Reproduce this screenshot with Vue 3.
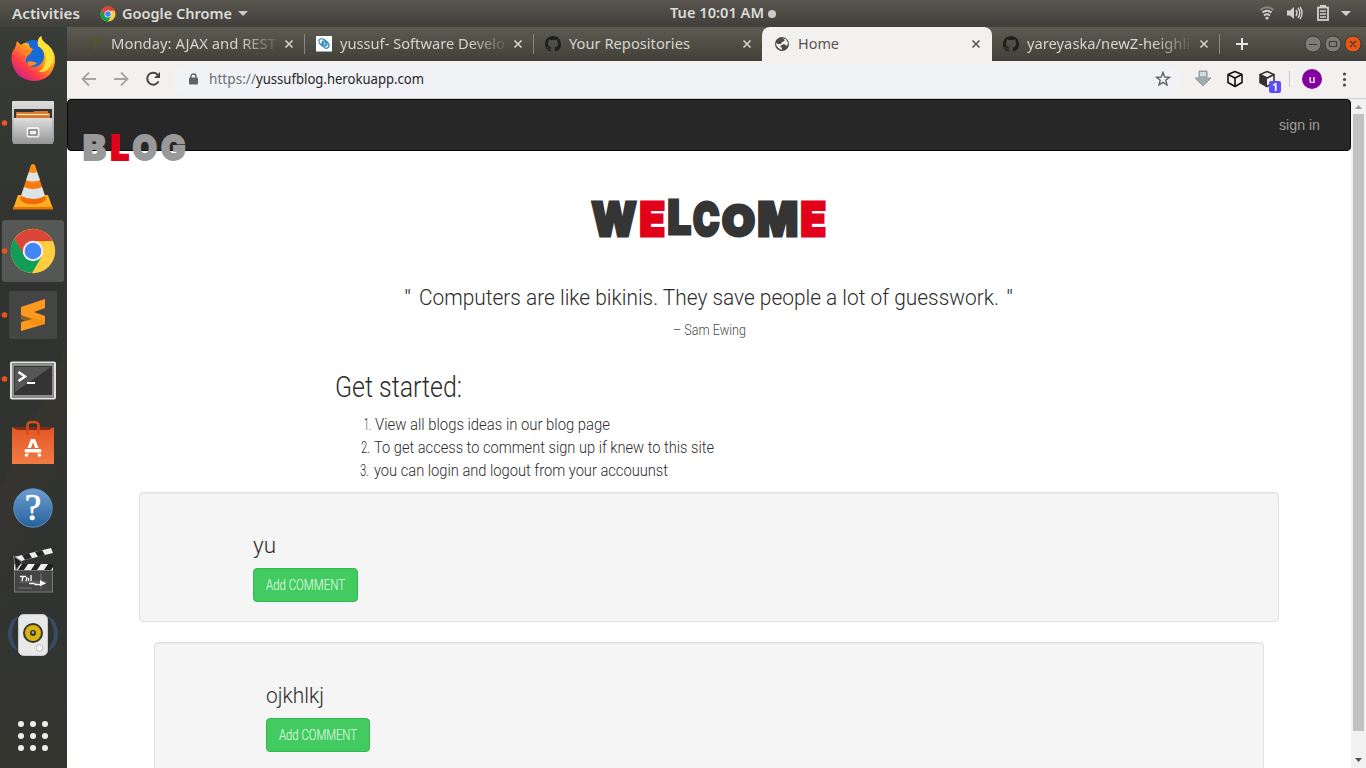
<script setup>
import { h } from 'vue'

// Single line of text drawn at an exact measure, baseline given from the box top.
const Fit = (p) =>
  h('svg', { class: 'fit', width: p.w, height: p.h, role: 'text' }, [
    h('text', { x: 0, y: p.b, 'font-size': p.s, textLength: p.w, lengthAdjust: 'spacingAndGlyphs' }, p.t),
  ])
Fit.props = ['t', 'w', 'h', 'b', 's']

const tabs = [
  { title: 'Monday: AJAX and REST', w: 165, kind: 'tree', cls: 'first fade' },
  { title: 'yussuf- Software Develo', w: 165, kind: 'swirl', cls: 'second fade' },
  { title: 'Your Repositories', w: 121, kind: 'github', cls: 'nosep' },
  { title: 'Home', w: 41, kind: 'globe', cls: 'active' },
  { title: 'yareyaska/newZ-heighli', w: 163, kind: 'github', cls: 'last fade' },
]
const steps = [
  { n: '1.', nw: 7, t: 'View all blogs ideas in our blog page', w: 235, pad: 364, gap: 4 },
  { n: '2.', nw: 9, t: 'To get access to comment sign up if knew to this site', w: 340, pad: 361, gap: 4 },
  { n: '3.', nw: 9, t: 'you can login and logout from your accouunst', w: 294, pad: 360, gap: 5 },
]
const posts = [
  { name: 'yu', w: 23, bw: 79, cls: '' },
  { name: 'ojkhlkj', w: 58, bw: 78, cls: 'inner' },
]
const welcome = [
  { c: 'W', x: 591.5, w: 45, y: 237 }, { c: 'E', x: 639.5, w: 25.5, y: 237, red: true },
  { c: 'L', x: 667.5, w: 23.5, y: 235 }, { c: 'C', x: 693, w: 26.5, y: 237 },
  { c: 'O', x: 722, w: 33, y: 237, small: true }, { c: 'M', x: 757.5, w: 40.5, y: 237 },
  { c: 'E', x: 800.5, w: 25.5, y: 237, red: true },
]
const blog = [
  { c: 'B', x: 83, w: 23 }, { c: 'L', x: 110.5, w: 18.5, red: true },
  { c: 'O', x: 132.500, w: 24.5 }, { c: 'G', x: 161, w: 24.5 },
]
</script>

<template>
  <div class="desktop">
    <header class="topbar">
      <Fit class="act" t="Activities" :w="68" :h="27" :b="19" :s="14.5" />
      <svg class="minichrome" width="16" height="16" viewBox="9 227 48 48">
        <circle cx="33" cy="251" r="22.5" fill="#ffcd40" />
        <path d="M13 240A22.5 22.5 0 0 1 53.5 241H33L23 257Z" fill="#db4437" />
        <path d="M13.5 240A22.5 22.5 0 0 0 33 273.5L43 256H24Z" fill="#0f9d58" />
        <circle cx="33" cy="251" r="10.5" fill="#f1f1f1" /><circle cx="33" cy="251" r="8.3" fill="#4285f4" />
      </svg>
      <Fit class="appname" t="Google Chrome" :w="110" :h="27" :b="19" :s="14.5" />
      <svg class="caret" width="10" height="5"><path d="M0 0H10L5 5Z" fill="#ccc" /></svg>
      <Fit class="clock" t="Tue 10:01 AM" :w="94" :h="27" :b="18" :s="14.5" />
      <svg class="bullet" width="8" height="8"><circle cx="4" cy="4" r="4" fill="#ccc" /></svg>
      <svg class="tray" width="100" height="27" viewBox="1256 0 100 27">
        <g fill="none" stroke="#d0d0cd">
          <path d="M1260.5 10Q1267 4.5 1273.5 10" stroke="#858580" stroke-width="2" />
          <path d="M1262.5 12.5Q1267 9 1271.5 12.5M1264 15.5Q1267 13 1270 15.5" stroke-width="1.8" />
          <path d="M1296 10Q1298 13 1296 16M1298 8Q1301.500 13 1298 18M1300 7Q1304 13 1300 19" stroke-width="1.4" />
          <rect x="1318" y="7.500" width="10" height="12.500" stroke-width="1.8" />
          <path d="M1320 11H1326M1320 14H1326M1320 17H1326" stroke-width="1.400" />
        </g>
        <path d="M1265 18L1267 20L1269 18L1267 16.500ZM1287 10.500H1290L1294 7V19L1290 15.500H1287ZM1320 5H1326V8H1320ZM1341 11H1351L1346 16Z" fill="#d0d0cd" />
      </svg>
    </header>

    <div class="body">
      <aside class="dock">
        <svg viewBox="0 27 67 64">
          <defs>
            <linearGradient id="ff" x1="1" y1="0" x2="0.2" y2="1"><stop stop-color="#fff14a" /><stop offset=".45" stop-color="#ffa51c" /><stop offset=".75" stop-color="#ff3a47" /><stop offset="1" stop-color="#c6209a" /></linearGradient>
            <linearGradient id="silver" x1="0" y1="0" x2="0" y2="1"><stop stop-color="#dedede" /><stop offset="1" stop-color="#959595" /></linearGradient>
            <linearGradient id="orange" x1="0" y1="0" x2="0" y2="1"><stop stop-color="#ff941d" /><stop offset="1" stop-color="#ef6500" /></linearGradient>
            <linearGradient id="bag" x1="0" y1="0" x2="0" y2="1"><stop stop-color="#e35625" /><stop offset="1" stop-color="#f27c43" /></linearGradient>
            <linearGradient id="blue" x1="0" y1="0" x2="0" y2="1"><stop stop-color="#6a9ed5" /><stop offset="1" stop-color="#276099" /></linearGradient>
          </defs>
          <circle cx="34" cy="57" r="17" fill="#1769d3" />
          <path d="M17 41L21 45Q25 41 29 44Q29 48 33 49L30 54Q25 57 26 62Q30 69 38 66Q45 62 44 54Q43 48 38 45Q37 39 41 36Q42 42 48 45Q56 52 55 62Q52 81 33 81Q14 79 11.500 60Q11 52 15 48Z" fill="url(#ff)" />
          <path d="M41 36Q42 42 48 45Q55 52 53 62Q48 73 39 72Q46 67 46 58Q44 49 38 46Q37 39 41 36" fill="#ffe237" />
          <path d="M27 62Q31 60 37 63Q34 66 29 66" fill="#ff8b26" />
          <path d="M21 52Q26 47 32 50Q30 54 25 56Z" fill="#ff8425" />
        </svg>
        <svg viewBox="0 91 67 64">
          <circle cx="4.500" cy="123" r="2.800" fill="#e95420" />
          <rect x="12" y="101" width="42" height="41" rx="1" fill="url(#silver)" />
          <path d="M14 109H52V121H14Z" fill="#343434" />
          <path d="M16 114V112H33L35 111H48V113H50V121H16Z" fill="#db7429" /><path d="M17 114.500H49" stroke="#fff1c9" stroke-width="1.200" />
          <path d="M14 118H52L53 144H13Z" fill="url(#silver)" /><rect x="27.500" y="128" width="11" height="8.500" rx="1" fill="#d9d9d9" stroke="#eee" stroke-width="2" /><rect x="29" y="130" width="8" height="5" fill="#eee" stroke="#555" />
        </svg>
        <svg viewBox="0 155 67 64">
          <path d="M18 195H48L53 209H13Z" fill="#ffad22" /><path d="M13 207H53V209.500H13Z" fill="#e97500" />
          <path d="M31 165Q33 163 35 165L46 199Q44 204 33 204Q22 204 20 199Z" fill="url(#orange)" />
          <path d="M29 172Q33 174 37 172L40 180Q33 183 26 180ZM24 187Q33 191 42 187L45 196Q34 202 21 196Z" fill="#dce4e8" />
        </svg>
        <svg viewBox="0 219 67 64">
          <rect x="2" y="220" width="62" height="62" rx="3" fill="#fff" opacity=".18" /><circle cx="4.500" cy="251" r="2.800" fill="#e95420" />
          <circle cx="33" cy="251" r="22.200" fill="#ffcd40" /><path d="M14.500 239A22 22 0 0 1 52.500 241H33L24 256Z" fill="#db4437" />
          <path d="M14.500 239A22 22 0 0 0 32 273L42 256L34 261L24 255Z" fill="#0f9d58" />
          <circle cx="33" cy="251" r="10.200" fill="#f1f1f1" /><circle cx="33" cy="251" r="8.300" fill="#4285f4" />
        </svg>
        <svg viewBox="0 283 67 64">
          <circle cx="4.500" cy="315" r="2.800" fill="#e95420" /><rect x="9" y="291" width="48" height="48" rx="2" fill="#454545" />
          <path d="M21 307L45 299V308L34 312L45 316V324L21 331V322L32 319L21 315Z" fill="#ff9820" /><path d="M21 315L45 321V324L38 326L21 319Z" fill="#e88300" opacity=".45" />
        </svg>
        <svg viewBox="0 347 67 64">
          <circle cx="4.500" cy="379" r="2.800" fill="#e95420" /><rect x="11" y="362.500" width="44" height="36" rx="1" fill="#343434" stroke="#e1e1e1" stroke-width="2" /><rect x="13" y="365" width="40" height="31" fill="none" stroke="#aaa" stroke-width="1.500" />
          <path d="M15 367H51L15 392Z" fill="#565656" /><path d="M18.500 372L25 376.500L18.500 381" fill="none" stroke="#fff" stroke-width="2.500" /><path d="M27 383H35" stroke="#fff" stroke-width="2" />
        </svg>
        <svg viewBox="0 411 67 64">
          <path d="M14 427H52V433H14Z" fill="#812c15" /><path d="M12 427L17 430H49L54 427V464H12Z" fill="url(#bag)" />
          <path d="M27.500 435V425Q27.500 422 33 422Q38.500 422 38.500 425V435" fill="none" stroke="#d84b1e" stroke-width="2.600" />
          <path d="M26 456.500L32 440.500H34L40 456.500" fill="none" stroke="#fff" stroke-width="3.200" /><rect x="24" y="448.500" width="18" height="4.500" rx="2" fill="#fff" stroke="#e96632" />
        </svg>
        <svg viewBox="0 475 67 64">
          <circle cx="33" cy="508" r="19.200" fill="url(#blue)" stroke="#5f91c4" /><text x="33" y="520" text-anchor="middle" font-family="Liberation Serif, serif" font-size="37" fill="#fff" stroke="#fff" stroke-width=".7">?</text>
        </svg>
        <svg viewBox="0 539 67 64">
          <path d="M14 557L51 548L53 553L17 562Z" fill="#eee" /><path d="M22 555L29 553L32 558L25 560ZM35 552L42 550L45 555L38 557Z" fill="#272727" />
          <path d="M14 564H53V570H14Z" fill="#eee" /><path d="M22 564H28L24 570H18ZM35 564H41L37 570H31ZM48 564H53V567L51 570H44Z" fill="#222" /><path d="M13.500 556L22 562L16 570Z" fill="#222" stroke="#777" />
          <rect x="14.500" y="570.500" width="38" height="21.500" fill="#454545" stroke="#777" />
          <path d="M19 588H32M19 582H47M41 573V589" stroke="#777" /><path d="M20 576.500H26M23 576.500L22 581M27 577L26 581M28.500 578V581M31 575V581M29 583.500H34M35 583V584.500H40" fill="none" stroke="#fff" stroke-width="1.300" /><path d="M40 580L46 583.500L40 586Z" fill="#fff" />
        </svg>
        <svg viewBox="0 603 67 64">
          <path d="M17 617Q5 634 17 650M14 619Q4 634 14 648M49 617Q61 634 49 650M52 619Q62 634 52 648" fill="none" stroke="#386092" stroke-width="2" opacity=".55" />
          <rect x="18.500" y="614.500" width="29" height="41" rx="5" fill="#e8e8e8" stroke="#c8c8c8" /><circle cx="33" cy="633" r="10" fill="#353535" /><circle cx="33" cy="633" r="8" fill="#d8b50d" /><circle cx="33" cy="633" r="3" fill="#333" /><circle cx="33" cy="632.500" r="1.300" fill="#aaa" /><circle cx="39.500" cy="648" r="3.300" fill="#fafafa" stroke="#bbb" />
        </svg>
        <svg class="apps" viewBox="0 704 67 64" fill="#eeeeec">
          <template v-for="y in 3" :key="y"><circle v-for="x in 3" :key="x" :cx="9 + x * 12" :cy="712 + y * 12" r="3" /></template>
        </svg>
      </aside>

      <main class="browser">
        <nav class="tabs">
          <div v-for="(t, i) in tabs" :key="i" class="tab" :class="t.cls">
            <svg class="fav" width="16" height="16" viewBox="0 0 16 16">
              <path v-if="t.kind === 'tree'" d="M2 6L4 3L7 4L9 1L12 3L14 6L11 6L13 9L9 7L9 14L8 14L8 8L4 9L5 6Z" fill="#4c5730" />
              <g v-else-if="t.kind === 'swirl'"><rect width="16" height="15.500" fill="#fff" /><g fill="none" stroke="#2383bd" stroke-width="1.200"><ellipse cx="7" cy="6.500" rx="4.500" ry="3" transform="rotate(35 7 6.500)" /><ellipse cx="9.500" cy="8.500" rx="4" ry="3" transform="rotate(55 9.500 8.500)" /><circle cx="8.500" cy="7.500" r="1.500" /></g></g>
              <path v-else-if="t.kind === 'github'" fill="#1d1f1d" d="M8 0C3.580 0 0 3.580 0 8c0 3.540 2.290 6.530 5.470 7.590.4.070.55-.17.55-.38v-1.490c-2.010.37-2.530-.49-2.690-.94-.09-.23-.48-.94-.82-1.130-.28-.15-.68-.52-.01-.53.63-.01 1.080.58 1.230.82.72 1.210 1.870.87 2.330.66.07-.52.28-.87.51-1.070-1.780-.2-3.640-.89-3.640-3.950 0-.87.31-1.590.82-2.150-.08-.2-.36-1.020.08-2.120 0 0 .67-.21 2.200.82a7.400 7.400 0 0 1 4 0c1.530-1.040 2.200-.82 2.200-.82.44 1.100.16 1.920.08 2.120.51.56.82 1.270.82 2.150 0 3.070-1.870 3.750-3.650 3.950.29.25.54.73.54 1.480v2.190c0 .21.150.46.55.38A8 8 0 0 0 16 8c0-4.420-3.580-8-8-8z" />
              <g v-else><circle cx="8" cy="8" r="7" fill="#4a4a4a" /><path d="M7 2L10 3Q12 5 8 6L7 8H4L2 7Q2 11 6 13L8 14V12L6 10L10 8L13 10L14 7L12 3Z" fill="#f2f1ef" /></g>
            </svg>
            <Fit class="title" :t="t.title" :w="t.w" :h="34" :b="22" :s="14.500" />
            <svg class="x" width="10" height="10" viewBox="0 0 10 10"><path d="M1.500 1.500L8.500 8.500M8.500 1.500L1.500 8.500" stroke="currentColor" stroke-width="1.600" /></svg>
          </div>
          <svg class="winctl" width="146" height="34" viewBox="1220 27 146 34">
            <path d="M1236 44H1248M1242 38V50" stroke="#e6e5df" stroke-width="2" />
            <g fill="#7d7c75" stroke="#3b3a36"><circle cx="1313" cy="44" r="8" /><circle cx="1333" cy="44" r="8" /><circle cx="1353" cy="44" r="8" fill="#ed5515" /></g>
            <path d="M1309 44.500H1317M1329.500 41.500H1336.500V46.500H1329.500ZM1350 41L1356 47M1356 41L1350 47" fill="none" stroke="#3c3b37" stroke-width="1.200" />
          </svg>
        </nav>

        <div class="toolbar">
          <svg class="nav" width="102" height="37" viewBox="67 61 102 37" fill="none" stroke-width="1.800">
            <path d="M96 79H83M89 72.500L82.500 79L89 85.500M114 79H127M121 72.500L127.500 79L121 85.500" stroke="#a6a5a4" />
            <path d="M158 75A6 6 0 1 0 158.500 81.500" stroke="#454545" stroke-width="2" /><path d="M160 72V78H154Z" fill="#454545" />
          </svg>
          <div class="omnibox">
            <svg class="lock" width="9" height="12"><path d="M2 5V3.500Q2 1 4.500 1Q7 1 7 3.500V5" fill="none" stroke="#5f6368" stroke-width="1.400" /><rect y="4.500" width="9" height="7" rx="1" fill="#5f6368" /></svg>
            <Fit class="scheme" t="https://" :w="47" :h="31" :b="19" :s="14" />
            <Fit class="host" t="yussufblog.herokuapp.com" :w="168" :h="31" :b="19" :s="14" />
            <svg class="star" width="16" height="16" viewBox="0 0 16 16"><path d="M8 1.500L9.800 6L14.500 6.300L10.800 9.300L12 14L8 11.300L4 14L5.200 9.300L1.500 6.300L6.200 6Z" fill="none" stroke="#5f6368" stroke-width="1.400" /></svg>
          </div>
          <svg class="ext" width="185" height="37" viewBox="1181 61 185 37">
            <path d="M1199 71H1207V78H1211L1203 86L1195 78H1199Z" fill="#9eabb0" stroke="#8c9ba1" /><path d="M1200 72H1206V76H1200Z" fill="#d4dcdf" />
            <path d="M1235 71.500L1242 74.500V82.500L1235 86.500L1228 82.500V74.500ZM1228 74.500L1235 78L1242 74.500M1235 78V86" fill="none" stroke="#111" stroke-width="1.600" stroke-linejoin="round" />
            <path d="M1267 71.500L1274 74.500V82.500L1267 86.500L1260 82.500V74.500ZM1260 74.500L1267 78L1274 74.500" fill="none" stroke="#333" stroke-width="1.600" /><path d="M1260 74.500L1267 78V86.500L1260 83Z" fill="#333" />
            <rect x="1269" y="81" width="12" height="12" rx="2" fill="#5b4ef5" /><text x="1275" y="91" text-anchor="middle" font-size="10" font-weight="bold" fill="#fff">1</text>
            <path d="M1289.500 71V87" stroke="#c9c9c9" /><circle cx="1312" cy="79" r="10" fill="#8500a0" /><text x="1312" y="82.500" text-anchor="middle" font-size="10.500" font-weight="500" fill="#fff">u</text>
            <g fill="#4b4b4b"><circle cx="1344.500" cy="74" r="1.600" /><circle cx="1344.500" cy="79.500" r="1.600" /><circle cx="1344.500" cy="85" r="1.600" /></g>
          </svg>
        </div>

        <div class="viewport">
          <section class="page">
            <div class="navbar">
              <svg class="logo heavy" width="110" height="50" viewBox="80 123 110 50" stroke-width="1.800">
                <text v-for="l in blog" :key="l.c" :x="l.x" y="160" :textLength="l.w" lengthAdjust="spacingAndGlyphs" font-size="34" :class="{ red: l.red }">{{ l.c }}</text>
              </svg>
              <Fit class="signin" t="sign in" :w="41" :h="50" :b="30" :s="14" />
            </div>
            <svg class="welcome heavy" width="244" height="74" viewBox="587 181 244 74" stroke-width="3">
              <text v-for="(l, i) in welcome" :key="i" :x="l.x" :y="l.y - 1.500" :textLength="l.w" lengthAdjust="spacingAndGlyphs" :font-size="l.small ? 43 : 47" :class="{ red: l.red }">{{ l.c }}</text>
            </svg>
            <div class="quote">
              <Fit t="&quot;" :w="7" :h="30" :b="22" :s="22.500" />
              <Fit t="Computers are like bikinis. They save people a lot of guesswork." :w="580" :h="30" :b="22" :s="22.500" />
              <Fit t="&quot;" :w="7" :h="30" :b="22" :s="22.500" />
            </div>
            <Fit class="author" t="– Sam Ewing" :w="73" :h="20" :b="15" :s="14" />
            <Fit class="start" t="Get started:" :w="127" :h="34" :b="27" :s="29" />
            <div class="steps">
              <div v-for="s in steps" :key="s.n" class="step" :style="{ paddingLeft: s.pad - 67 + 'px' }">
                <Fit :t="s.n" :w="s.nw" :h="23" :b="16.500" :s="16" /><Fit :style="{ marginLeft: s.gap + 'px' }" :t="s.t" :w="s.w" :h="23" :b="16.500" :s="16" />
              </div>
            </div>
            <article v-for="p in posts" :key="p.name" class="card" :class="p.cls">
              <Fit class="name" :t="p.name" :w="p.w" :h="30" :b="23" :s="22.500" />
              <button class="add"><Fit t="Add COMMENT" :w="p.bw" :h="32" :b="21" :s="14.500" /></button>
            </article>
          </section>
          <div class="scroll">
            <svg width="15" height="15"><path d="M4 10H11L7.500 6Z" fill="#999" /></svg>
            <div class="thumb"></div>
            <svg width="15" height="15"><path d="M4 5H11L7.500 9Z" fill="#505050" /></svg>
          </div>
        </div>
      </main>
    </div>
  </div>
</template>

<style>
html, body { margin: 0; overflow: hidden; }
.fit { display: block; flex: none; overflow: visible; }
.fit text { fill: currentColor; white-space: pre; }
</style>
<style scoped>
.desktop { width: 1366px; height: 768px; overflow: hidden; display: flex; flex-direction: column; font-family: "Noto Sans", "Open Sans", sans-serif; }
svg { display: block; flex: none; }
.topbar { height: 27px; flex: none; display: flex; align-items: center; background: linear-gradient(#59564e, #403f3a); color: #dcdcd8; font-weight: 600; }
.act { margin-left: 12px; }
.minichrome { margin-left: 20px; }
.appname { margin-left: 6px; }
.caret { margin-left: 6px; }
.clock { margin-left: 422px; }
.bullet { margin-left: 4px; }
.tray { margin-left: auto; margin-right: 10px; }
.body { flex: 1; min-height: 0; display: flex; }
.dock { width: 67px; flex: none; display: flex; flex-direction: column; background: linear-gradient(115deg, transparent 52%, rgba(90, 60, 50, .15) 53%, transparent 70%), linear-gradient(#393b36, #30332f 30%, #303330 75%, #353530); }
.dock svg { width: 67px; height: 64px; }
.dock .apps { margin-top: auto; }
.browser { flex: 1; min-width: 0; display: flex; flex-direction: column; }
.tabs { height: 34px; flex: none; display: flex; background: linear-gradient(#5b5b51, #424139); }
.tab { width: 229px; box-sizing: border-box; height: 34px; display: flex; align-items: center; padding: 0 11px 0 12px; position: relative; color: #d6d5cd; }
.tab:not(.nosep):not(.active)::after { content: ""; position: absolute; right: 0; top: 7px; width: 1px; height: 20px; background: #89887f; }
.tab.first { width: 238px; padding: 0 11px 0 20px; }
.tab.second { padding-left: 11px; }
.tab.nosep { width: 228px; padding: 0 10px 0 11px; }
.tab.active { width: 230px; background: #f2f1ef; color: #55544f; border-radius: 8px 8px 0 0; }
.tab.last { width: 228px; padding-left: 11px; }
.title { margin-left: 8px; }
.fade .title { -webkit-mask-image: linear-gradient(90deg, #000 78%, rgba(0, 0, 0, .12)); mask-image: linear-gradient(90deg, #000 78%, rgba(0, 0, 0, .12)); }
.x { margin-left: auto; }
.winctl { margin-left: auto; }
.toolbar { height: 37px; flex: none; display: flex; background: #f2f1ef; border-bottom: 1px solid #cfcecd; }
.omnibox { flex: 1; margin: 4px 0 2px 4px; height: 31px; border-radius: 16px; background: #f0f2f5; display: flex; align-items: center; }
.lock { margin: 0 0 4px 16px; }
.scheme { margin-left: 11px; color: #6c7074; }
.host { color: #26262a; }
.star { margin: 0 10px 3px auto; }
.viewport { flex: 1; min-height: 0; display: flex; background: #fff; }
.page { width: 1284px; height: 669px; flex: none; overflow: hidden; display: flex; flex-direction: column; font-family: Roboto, "Open Sans", sans-serif; font-weight: 300; color: #2c2c2c; }
.navbar { height: 50px; flex: none; background: #272727; border: 1px solid #080808; border-radius: 4px; display: flex; justify-content: space-between; color: #9d9d9d; }
.logo { margin: 23px 0 0 12px; overflow: visible; fill: #999; stroke: #999; position: relative; }
.signin { font-family: "Liberation Sans", Arial, sans-serif; font-weight: 400; margin-right: 30px; }
.heavy { font-family: Inter, Lato, sans-serif; font-weight: 900; }
.heavy .red { fill: #e2001a; stroke: #e2001a; }
.welcome { margin: 30px 0 0 520px; fill: #353535; stroke: #353535; }
.quote { display: flex; gap: 7.5px; margin: 28px 0 0 337px; }
.author { margin: 7px 0 0 606px; color: #484848; }
.start { margin: 30px 0 0 268px; }
.steps { margin: 9px 0 10px; }
.step { display: flex; height: 23px; }
.card { box-sizing: border-box; width: 1140px; height: 130px; flex: none; margin: 0 0 20px 72px; padding: 37px 0 0 113px; background: #f5f5f5; border: 1px solid #e0e0e0; border-radius: 4px; box-shadow: inset 0 1px 1px rgba(0, 0, 0, .05); }
.card.inner { width: 1110px; margin-left: 87px; padding-left: 111px; }
.add { box-sizing: border-box; width: 105px; height: 34px; display: block; margin: 8px 0 0; padding: 0 0 0 12px; background: #41cb60; border: 1px solid #32b950; border-radius: 4px; color: #f4fff5; font: inherit; }
.inner .add { width: 104px; }
.scroll { width: 15px; display: flex; flex-direction: column; background: #f1f1f1; }
.thumb { height: 617px; margin: 0 2px; background: #c1c1c1; }
.scroll svg:last-child { margin-top: auto; }
</style>
